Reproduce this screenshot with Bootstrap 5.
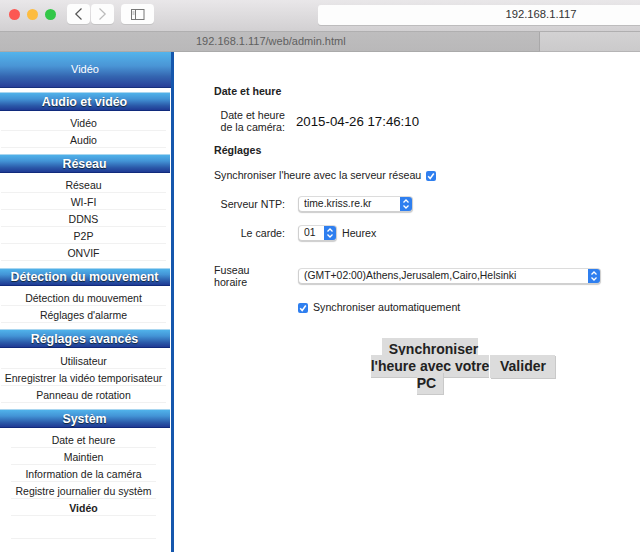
<!DOCTYPE html>
<html lang="fr">
<head>
<meta charset="utf-8">
<title>Date et heure</title>
<link rel="stylesheet" href="https://cdn.jsdelivr.net/npm/bootstrap@5.3.0/dist/css/bootstrap.min.css">
<style>
html,body{height:552px;overflow:hidden;background:#fff}
body{font-family:"Liberation Sans",Arial,sans-serif;font-size:10.65px;color:#222;line-height:13px}
.toolbar{height:32px;background:linear-gradient(#e9e7e9,#d2d0d2);border-bottom:1px solid #b0afb0;padding:4px 0 0 9px}
.light{width:11px;height:11px;border-radius:50%;margin:5px 7px 0 0}
.navgroup{margin-left:4px}
.chromebtn{height:20px;background:#fdfdfd;border-radius:4px;box-shadow:0 1px 0 #c4c3c4}
.fwdbtn{margin-left:1px}
.panelbtn{margin-left:7px}
.urlbar{height:20px;background:#fdfdfd;box-shadow:0 1px 0 #bdbcbd;width:322px;margin-left:auto;margin-top:1px;border-radius:3px 0 0 3px;font-size:11.25px;line-height:19px;text-align:center;padding-left:124px;color:#333}
.tabstrip{height:20px;font-size:11px;line-height:19px;color:#5f5f5f}
.tabon{width:540px;background:linear-gradient(#bebdbe,#b9b8b9);border-bottom:1px solid #aaa;border-right:1px solid #a9a8a9;padding-left:196px}
.taboff{flex:1;background:linear-gradient(#d3d2d3,#cbcacb);border-bottom:1px solid #b5b4b5}
.shell{height:500px}
.side{width:174px;flex:none;border-right:3px solid #1557ad;text-align:center;color:#222}
.sidetop{height:36px;background:linear-gradient(#53b4ec 0,#4a95d5 40%,#3465b0 70%,#283f98 100%);color:#fff;font-size:11px;line-height:35px;border-bottom:1px solid #16307d;padding-right:1px}
.sechead{height:19px;margin-right:1px;padding-right:1px;background:linear-gradient(#50b2ea 0,#4394d6 35%,#2a58a8 75%,#1f3a94 100%);color:#fff;font-weight:700;font-size:12.4px;line-height:18px;border-bottom:1px solid #102a7c;border-top:1px solid #a9d6f0;text-shadow:0 1px 1px #123}
.group1{margin-top:4px}
.group2{margin-top:6px}
.group3{margin-top:7px;height:18px;line-height:17px}
.items{list-style:none;margin:3px 0 0;padding:0 5px 0 1px}
.tallgap{margin-top:4px}
.items li{height:17px;padding-top:2px;line-height:14px;border-bottom:1px solid #f1f1f1;font-size:10.5px}
.narrow{padding:0 15px 0 11px}
.emptyrow{height:23px!important}
.pane{flex:1;padding:33px 0 0 40px;color:#222}
.headline{font-weight:700;font-size:10.65px;line-height:13px;margin:0}
.lab{width:71px;flex:none;text-align:right;line-height:12px}
.stamp{font-size:13.25px;margin-left:11px;color:#111}
.pick{appearance:none;-webkit-appearance:none;height:16px;border:1px solid #d0d0d0;border-top-color:#dcdcdc;border-radius:4px;padding:0 0 0 5px;font:10.4px/14px "Liberation Sans",Arial,sans-serif;color:#222;box-shadow:0 1px 1px #ccc;background-color:#fff;background-image:url("data:image/svg+xml,%3Csvg xmlns='http://www.w3.org/2000/svg' width='12' height='16'%3E%3Crect width='12' height='16' fill='%232f7fef'/%3E%3Cpath d='M3.500 6.500 6 4l2.500 2.500M3.500 9.500 6 12l2.500-2.500' fill='none' stroke='%23fff' stroke-width='1.300'/%3E%3C/svg%3E");background-repeat:no-repeat;background-position:right center;background-size:12px 16px}
.pickntp{width:115px;margin-left:13px}
.pickhr{width:39px;margin-left:13px}
.picktz{width:303px}
.tick{appearance:none;-webkit-appearance:none;width:10px;height:10px;flex:none;border-radius:2px;background-color:#2f7fef;margin:0;background-image:url("data:image/svg+xml,%3Csvg xmlns='http://www.w3.org/2000/svg' width='10' height='10'%3E%3Cpath d='M2.200 5.200 4.200 7.500 7.800 2.500' fill='none' stroke='%23fff' stroke-width='1.500'/%3E%3C/svg%3E")}
.gap5{margin-left:5px}
.zonelab{width:84px;flex:none;line-height:12px}
.rowdate{margin-top:11px}
.rowregl{margin-top:11px}
.rowsync{margin-top:12px}
.rowntp{margin-top:14px}
.rowhr{margin-top:13px}
.rowtz{margin-top:23px}
.rowauto{margin:13px 0 0 84px}
.actions{margin:27px 0 0 156px;font-size:14px;font-weight:700;line-height:17px;color:#222}
.syncbox{width:120px;text-align:center}
.syncbox a,.okbtn{background:#dcdcdc;padding:3px 7px;color:#222;text-decoration:none;box-shadow:1px 1px 0 #c9c9c9}
.okbtn{padding:3px 9px 3px 10px;display:block}
</style>
</head>
<body>
<div class="toolbar d-flex">
  <span class="light" style="background:#fc5753"></span>
  <span class="light" style="background:#fdbc40"></span>
  <span class="light" style="background:#33c748"></span>
  <div class="d-flex navgroup">
    <div class="chromebtn d-flex align-items-center justify-content-center" style="width:23px"><svg width="9" height="14" viewBox="0 0 9 14"><path d="M7.500 1.500 1.800 7l5.700 5.500" fill="none" stroke="#555" stroke-width="1.200"/></svg></div>
    <div class="chromebtn fwdbtn d-flex align-items-center justify-content-center" style="width:23px"><svg width="9" height="14" viewBox="0 0 9 14"><path d="M1.500 1.500 7.200 7 1.500 12.500" fill="none" stroke="#bbb" stroke-width="1.200"/></svg></div>
    <div class="chromebtn panelbtn d-flex align-items-center justify-content-center" style="width:33px"><svg width="14" height="11" viewBox="0 0 14 11"><rect x=".5" y=".5" width="12.500" height="10" fill="none" stroke="#777"/><path d="M4.500 .5v10" stroke="#777"/><path d="M1.500 3h2M1.500 5h2" stroke="#999"/></svg></div>
  </div>
  <div class="urlbar">192.168.1.117</div>
</div>
<div class="tabstrip d-flex">
  <div class="tabon">192.168.1.117/web/admin.html</div>
  <div class="taboff"></div>
</div>
<div class="shell d-flex">
  <nav class="side">
    <div class="sidetop">Vidéo</div>
    <div class="sechead group1">Audio et vidéo</div>
    <ul class="items"><li>Vidéo</li><li>Audio</li></ul>
    <div class="sechead group2">Réseau</div>
    <ul class="items"><li>Réseau</li><li>WI-FI</li><li>DDNS</li><li>P2P</li><li>ONVIF</li></ul>
    <div class="sechead group3">Détection du mouvement</div>
    <ul class="items"><li>Détection du mouvement</li><li>Réglages d'alarme</li></ul>
    <div class="sechead group2">Réglages avancés</div>
    <ul class="items tallgap"><li>Utilisateur</li><li>Enregistrer la vidéo temporisateur</li><li>Panneau de rotation</li></ul>
    <div class="sechead group2">Systèm</div>
    <ul class="items narrow"><li>Date et heure</li><li>Maintien</li><li>Information de la caméra</li><li>Registre journalier du systèm</li><li class="fw-bold">Vidéo</li><li class="emptyrow"></li></ul>
  </nav>
  <main class="pane">
    <p class="headline">Date et heure</p>
    <div class="d-flex align-items-center rowdate">
      <div class="lab">Date et heure<br>de la caméra:</div>
      <div class="stamp">2015-04-26 17:46:10</div>
    </div>
    <p class="headline rowregl">Réglages</p>
    <div class="d-flex align-items-center rowsync">
      <span>Synchroniser l'heure avec la serveur réseau</span>
      <input type="checkbox" class="tick gap5" checked>
    </div>
    <div class="d-flex align-items-center rowntp">
      <div class="lab">Serveur NTP:</div>
      <select class="pick pickntp"><option>time.kriss.re.kr</option></select>
    </div>
    <div class="d-flex align-items-center rowhr">
      <div class="lab">Le carde:</div>
      <select class="pick pickhr"><option>01</option></select>
      <span class="gap5">Heurex</span>
    </div>
    <div class="d-flex align-items-center rowtz">
      <div class="zonelab">Fuseau<br>horaire</div>
      <select class="pick picktz"><option>(GMT+02:00)Athens,Jerusalem,Cairo,Helsinki</option></select>
    </div>
    <div class="d-flex align-items-center rowauto">
      <input type="checkbox" class="tick" checked>
      <span class="gap5">Synchroniser automatiquement</span>
    </div>
    <div class="actions d-flex align-items-center">
      <div class="syncbox"><a href="#">Synchroniser l'heure avec votre PC</a></div>
      <a href="#" class="okbtn">Valider</a>
    </div>
  </main>
</div>
</body>
</html>
